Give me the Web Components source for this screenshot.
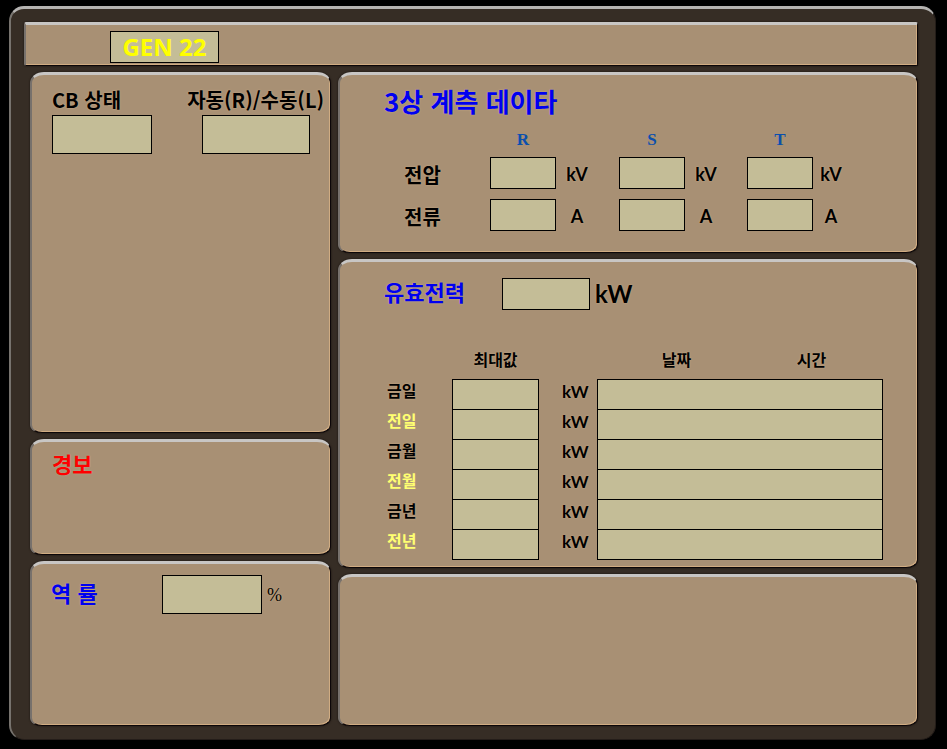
<!DOCTYPE html>
<html lang="ko">
<head>
<meta charset="utf-8">
<title>GEN 22</title>
<style>
  :root {
    --case: #362d25;
    --panel: #a89074;
    --field: #c4bd97;
    --glow: #cfae86;
    --blue: #0000f0;
    --phase: #0a4fae;
    --sans: "Noto Sans CJK KR", "Noto Sans", sans-serif;
    --unit: Lato, "Noto Sans CJK KR", sans-serif;
  }
  body { margin: 0; background: #000; color: #000; font: bold 20px/24px var(--sans); }
</style>
</head>
<body>
<gen-monitor></gen-monitor>

<script>
const define = (name, html, setup) => {
  const template = document.createElement('template');
  template.innerHTML = html;
  customElements.define(name, class extends HTMLElement {
    constructor() {
      super();
      this.attachShadow({ mode: 'open' }).append(template.content.cloneNode(true));
    }
    connectedCallback() { if (setup) setup(this, this.shadowRoot); }
  });
};

/* Bevelled plate */
define('hmi-panel', `
  <style>
    :host {
      display: block; box-sizing: border-box; min-width: 0;
      background: var(--panel);
      border-style: solid; border-width: 3px 1px 1px 2px;
      border-color: #c8c6c4 #0c0608 #0c0608 #77716c;
      border-radius: 14px 14px 12px 12px / 11px 11px 8px 8px;
      box-shadow: inset -1px -1px 0 #d0ac82, 0 0 2px #15100d;
      text-shadow: 0 0 2px var(--glow);
    }
    :host([square]) { border-radius: 2px; }
  </style>
  <slot></slot>`);

/* Read-only value box */
define('hmi-field', `
  <style>
    :host { display: block; }
    input {
      display: block; box-sizing: border-box; width: 100%; height: 100%;
      margin: 0; padding: 0 8px; border: 1px solid #000; border-radius: 0;
      background: var(--field); color: #000; font: inherit; outline: none;
    }
  </style>
  <input type="text" readonly>`,
  (host, root) => root.querySelector('input').setAttribute('aria-label', host.getAttribute('label') || ''));

/* Caption above a value box */
define('hmi-status', `
  <style>
    :host { display: block; }
    label { display: block; height: 26px; line-height: 22px; white-space: nowrap; }
    input {
      display: block; box-sizing: border-box; width: 100px; height: 39px;
      margin: 0; padding: 0 8px; border: 1px solid #000; border-radius: 0;
      background: var(--field); font: inherit; outline: none;
    }
    :host([wide]) input { width: 108px; margin: 0 auto; }
  </style>
  <label for="v"><slot></slot></label>
  <input id="v" type="text" readonly>`);

/* Caption, value box and unit on one line */
define('hmi-reading', `
  <style>
    :host { display: flex; align-items: center; color: #000; }
    label { flex: none; width: 118px; padding-bottom: 5px; font-size: 22px; color: var(--blue); white-space: nowrap; }
    input {
      box-sizing: border-box; width: 88px; height: 32px;
      margin: 0; padding: 0 8px; border: 1px solid #000; border-radius: 0;
      background: var(--field); font: inherit; outline: none;
    }
    span { margin-left: 5px; font: bold 24px/24px var(--unit); }
    :host([tall]) label { width: 111px; }
    :host([tall]) input { width: 100px; height: 39px; }
    :host([tall]) span { font: 18px/24px "Liberation Serif", serif; }
  </style>
  <label for="v"><slot></slot></label>
  <input id="v" type="text" readonly>
  <span><slot name="unit"></slot></span>`);

/* Voltage and current per phase */
define('phase-table', `
  <style>
    :host { display: block; }
    table { border-collapse: collapse; table-layout: fixed; width: 484px; }
    th, td { padding: 0; font-weight: bold; }
    thead th { height: 24px; font: bold 17px/24px "Liberation Serif", serif; color: var(--phase); text-shadow: none; }
    tbody tr { height: 42px; }
    tbody th { text-align: left; padding-left: 20px; padding-top: 4px; }
    hmi-field { height: 32px; }
    .unit { padding: 2px 0 0 9px; font: bold 18px/24px var(--unit); }
    .unit:last-child { padding-left: 6px; }
    .unit span { display: block; width: 24px; text-align: center; }
  </style>
  <table>
    <colgroup><col style="width:106px"><col style="width:66px"><col style="width:63px"><col style="width:66px"><col style="width:62px"><col style="width:66px"><col></colgroup>
    <thead><tr><td></td><th scope="col">R</th><td></td><th scope="col">S</th><td></td><th scope="col">T</th><td></td></tr></thead>
    <tbody></tbody>
  </table>`,
  (host, root) => {
    root.querySelector('tbody').innerHTML = [['전압', 'kV'], ['전류', 'A']].map(([name, unit]) =>
      `<tr><th scope="row">${name}</th>${['R', 'S', 'T'].map(p =>
        `<td><hmi-field label="${name} ${p}"></hmi-field></td><td class="unit"><span>${unit}</span></td>`).join('')}</tr>`).join('');
  });

/* Peak power with its date and time */
define('peak-table', `
  <style>
    :host { display: block; font-size: 16px; }
    table { border-collapse: collapse; table-layout: fixed; width: 100%; }
    th, td { padding: 0; font-weight: bold; }
    thead th { height: 22px; padding-bottom: 9px; line-height: 22px; }
    thead .date { padding-left: 16px; }
    tbody tr { height: 30px; }
    tbody th { text-align: left; line-height: 22px; padding: 0 0 8px 3px; }
    .old { color: #ffff70; text-shadow: 0 0 2px #b09a80; }
    hmi-field { height: 31px; margin-bottom: -1px; }
    .unit { padding: 0 0 4px 23px; font: bold 17px/24px var(--unit); }
  </style>
  <table>
    <colgroup><col style="width:68px"><col style="width:87px"><col style="width:58px"><col><col></colgroup>
    <thead><tr><td></td><th scope="col">최대값</th><td></td><th class="date" scope="col">날짜</th><th scope="col">시간</th></tr></thead>
    <tbody></tbody>
  </table>`,
  (host, root) => {
    root.querySelector('tbody').innerHTML = ['금일', '전일', '금월', '전월', '금년', '전년'].map((name, i) =>
      `<tr><th scope="row"${i % 2 ? ' class="old"' : ''}>${name}</th>
       <td><hmi-field label="${name} 최대값"></hmi-field></td><td class="unit">kW</td>
       <td colspan="2"><hmi-field label="${name} 날짜 시간"></hmi-field></td></tr>`).join('');
  });

define('gen-monitor', `
  <style>
    :host {
      display: flex; box-sizing: border-box; min-height: 100vh;
      padding: 6px 11px 9px 9px; background: #000;
    }
    main {
      flex: 1; min-width: 0; box-sizing: border-box;
      display: flex; flex-direction: column; gap: 6px;
      padding: 13px 17px 13px 13px;
      background: var(--case);
      border-style: solid; border-width: 3px 1px 1px 2px;
      border-color: #b5b3b1 #241d19 #241d19 #77736e;
      border-radius: 15px;
    }
    h1, h2 { margin: 0; font-size: inherit; }
    .top { padding: 6px 0 2px 84px; }
    h1 {
      box-sizing: border-box; width: 109px; border: 1px solid #000;
      background: var(--field); color: #ff0; text-align: center; text-shadow: none;
      font: bold 24px/30px "Open Sans", sans-serif;
    }
    .body {
      flex: 1; margin-left: 6px;
      display: grid; grid-template-columns: 301fr 580fr; gap: 7px;
    }
    .col { display: grid; gap: 6px; min-width: 0; }
    .left { grid-template-rows: 361fr 116fr 165fr; }
    .right { grid-template-rows: 181fr 310fr 152fr; }
    .status { display: flex; justify-content: space-between; padding: 14px 6px 0 20px; }
    .alarm { padding: 9px 20px; font-size: 22px; color: #f00; text-shadow: 0 0 2px #a8b090; }
    .factor { padding: 11px 19px; }
    .phases { padding: 12px 33px 0 44px; }
    .phases h2 { font-size: 26px; line-height: 28px; color: var(--blue); margin-bottom: 13px; }
    .power { padding: 16px 34px 0 44px; }
    peak-table { margin-top: 38px; }
  </style>
  <main>
    <hmi-panel square><header class="top"><h1>GEN 22</h1></header></hmi-panel>
    <div class="body">
      <div class="col left">
        <hmi-panel><div class="status">
          <hmi-status>CB 상태</hmi-status>
          <hmi-status wide>자동(R)/수동(L)</hmi-status>
        </div></hmi-panel>
        <hmi-panel><h2 class="alarm">경보</h2></hmi-panel>
        <hmi-panel><div class="factor">
          <hmi-reading tall>역 률<span slot="unit">%</span></hmi-reading>
        </div></hmi-panel>
      </div>
      <div class="col right">
        <hmi-panel><section class="phases">
          <h2>3상 계측 데이타</h2>
          <phase-table></phase-table>
        </section></hmi-panel>
        <hmi-panel><section class="power">
          <hmi-reading>유효전력<span slot="unit">kW</span></hmi-reading>
          <peak-table></peak-table>
        </section></hmi-panel>
        <hmi-panel></hmi-panel>
      </div>
    </div>
  </main>`);
</script>
</body>
</html>
